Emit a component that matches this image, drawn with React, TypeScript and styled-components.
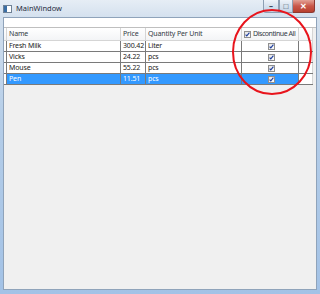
import styled, { createGlobalStyle } from 'styled-components';

const GlobalStyle = createGlobalStyle`
    html, body { margin: 0; padding: 0; }
    body {
        width: 320px;
        height: 294px;
        overflow: hidden;
        font-family: "Noto Sans", "Open Sans", sans-serif;
    }
`;

const Frame = styled.div`
    position: relative;
    width: 320px;
    height: 294px;
    box-sizing: border-box;
    display: flex;
    flex-direction: column;
    padding: 0 3px 4px 3px;
    background: linear-gradient(to bottom, #e6edf5 0px, #d3e0ee 18px, #b4cde8 120px, #a3c2e6 100%);
`;

const TitleBar = styled.div`
    height: 17px;
    display: flex;
    align-items: flex-start;
`;

const TitleIcon = styled.div`
    width: 7px;
    height: 6px;
    margin: 5px 4px 0 0;
    border: 1px solid #6f8296;
    background: linear-gradient(to right, #3a6ea5 0 3px, #ffffff 3px);
`;

const Title = styled.span`
    font-size: 7.5px;
    line-height: 10px;
    margin-top: 3px;
    color: #1e2b3c;
`;

const Caption = styled.div`
    margin-left: auto;
    margin-right: 2px;
    display: flex;
`;

const CaptionButton = styled.div<{ $close?: boolean; $w: number }>`
    width: ${p => p.$w}px;
    height: 13px;
    box-sizing: border-box;
    border: 1px solid ${p => (p.$close ? '#8d3a32' : '#8d9fb3')};
    border-top: none;
    border-left-width: ${p => (p.$close ? 0 : 1)}px;
    border-radius: ${p => (p.$close ? '0 0 3px 0' : '0')};
    background: ${p =>
        p.$close
            ? 'linear-gradient(to bottom, #e3a296, #c9584a 50%, #b8402f)'
            : 'linear-gradient(to bottom, #eef3f9, #d6e1ee 50%, #c5d5e7)'};
    display: flex;
    align-items: center;
    justify-content: center;
    color: ${p => (p.$close ? '#fff' : '#3b4a5c')};
    font-size: 8px;
    font-weight: bold;
    line-height: 1;
    &:first-child { border-radius: 0 0 0 3px; }
`;

const Client = styled.div`
    flex: 1;
    display: flex;
    flex-direction: column;
    background: #ffffff;
    border: 1px solid #8fa3ba;
    padding-top: 9px;
`;

const Grid = styled.div`
    flex: 1;
    display: flex;
    flex-direction: column;
    background: #f0f0f0;
    border-top: 1px solid #bfbfbf;
`;

const Row = styled.div<{ $header?: boolean }>`
    display: grid;
    grid-template-columns: 3px 114px 25px 96px 57px 14px;
    height: ${p => (p.$header ? 12 : 10)}px;
    border-bottom: 1px solid ${p => (p.$header ? '#d5d5d5' : '#7a7a7a')};
    background: ${p => (p.$header ? 'linear-gradient(to bottom, #ffffff, #f3f4f6)' : '#ffffff')};
    width: 309px;
`;

const Cell = styled.div<{ $selected?: boolean; $header?: boolean; $center?: boolean }>`
    box-sizing: border-box;
    border-right: 1px solid ${p => (p.$header ? '#d5d5d5' : '#7a7a7a')};
    background: ${p => (p.$selected ? '#3399ff' : 'transparent')};
    color: ${p => (p.$selected ? '#ffffff' : p.$header ? '#333a44' : '#1a1a1a')};
    font-size: 7px;
    letter-spacing: -0.15px;
    line-height: ${p => (p.$header ? 12 : 10)}px;
    padding-left: 2px;
    white-space: nowrap;
    overflow: ${p => (p.$header ? 'visible' : 'hidden')};
    display: flex;
    align-items: center;
    justify-content: ${p => (p.$center ? 'center' : 'flex-start')};
`;

const Lead = styled.div<{ $header?: boolean }>`
    border-right: 1px solid ${p => (p.$header ? '#d5d5d5' : '#7a7a7a')};
`;

const Filler = styled.div`
    border-right: 1px solid #d5d5d5;
`;

const Box = styled.span`
    width: 7px;
    height: 7px;
    box-sizing: border-box;
    border: 1px solid #8f8f8f;
    background: linear-gradient(to bottom right, #e4e4e4, #fbfbfb);
    display: inline-flex;
    align-items: center;
    justify-content: center;
    flex-shrink: 0;
`;

const HeaderLabel = styled.span`
    margin-left: 2px;
    letter-spacing: -0.45px;
`;

const Marker = styled.svg`
    position: absolute;
    left: 0;
    top: 0;
    pointer-events: none;
`;

const Check = () => (
    <Box>
        <svg width="5" height="5" viewBox="0 0 5 5">
            <path d="M0.6 2.6 L1.8 3.9 L4.4 0.7" fill="none" stroke="#1c3c9c" strokeWidth="1.1" />
        </svg>
    </Box>
);

const products = [
    { name: 'Fresh Milk', price: '300.42', unit: 'Liter' },
    { name: 'Vicks', price: '24.22', unit: 'pcs' },
    { name: 'Mouse', price: '55.22', unit: 'pcs' },
    { name: 'Pen', price: '11.51', unit: 'pcs' },
];

const App = () => {
    const selected = 3;
    return (
        <Frame>
            <GlobalStyle />
            <TitleBar>
                <TitleIcon />
                <Title>MainWindow</Title>
                <Caption>
                    <CaptionButton $w={16}>–</CaptionButton>
                    <CaptionButton $w={14}>□</CaptionButton>
                    <CaptionButton $w={22} $close>✕</CaptionButton>
                </Caption>
            </TitleBar>
            <Client>
                <Grid>
                    <Row $header>
                        <Lead $header />
                        <Cell $header>Name</Cell>
                        <Cell $header>Price</Cell>
                        <Cell $header>Quantity Per Unit</Cell>
                        <Cell $header>
                            <Check />
                            <HeaderLabel>Discontinue All</HeaderLabel>
                        </Cell>
                        <Filler />
                    </Row>
                    {products.map((p, i) => (
                        <Row key={p.name}>
                            <Lead />
                            <Cell $selected={i === selected}>{p.name}</Cell>
                            <Cell $selected={i === selected}>{p.price}</Cell>
                            <Cell $selected={i === selected}>{p.unit}</Cell>
                            <Cell $selected={i === selected} $center>
                                <Check />
                            </Cell>
                            <Filler />
                        </Row>
                    ))}
                </Grid>
            </Client>
            <Marker width="320" height="294">
                <ellipse cx="272" cy="52" rx="39" ry="42" fill="none" stroke="#e8141c" strokeWidth="2" />
            </Marker>
        </Frame>
    );
};

export default App;
